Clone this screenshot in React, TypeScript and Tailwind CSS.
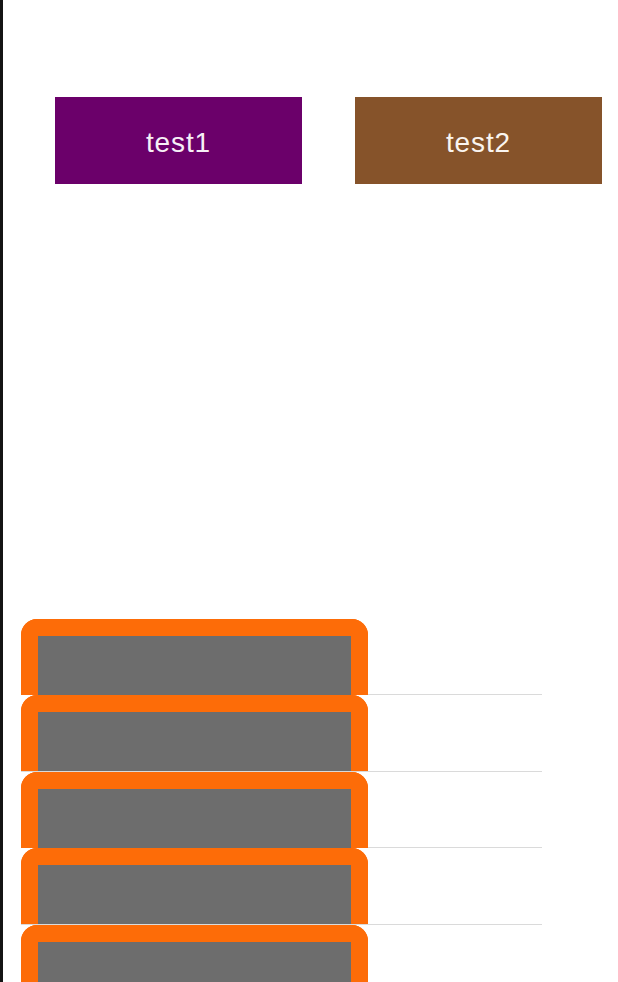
export default function App() {
  const rows = [0, 1, 2, 3, 4];
  return (
    <div className="flex min-h-[982px] h-[982px] overflow-hidden bg-white" style={{ fontFamily: '"Liberation Sans", Arial, sans-serif' }}>
      <div className="w-[3px] shrink-0 bg-[#141414]" />
      <div className="flex-1 flex flex-col">
        <div className="flex mt-[97.3px] ml-[52px] gap-[53px]">
          <div className="w-[247px] h-[86.7px] bg-[#6b006a] flex items-center justify-center pt-[4px] text-[28px] text-[#f7f0f7] tracking-[0.9px]">
            test1
          </div>
          <div className="w-[247px] h-[86.7px] bg-[#86532a] flex items-center justify-center pt-[4px] text-[28px] text-[#faf5f0] tracking-[0.9px]">
            test2
          </div>
        </div>
        <div className="mt-[435px] flex flex-col">
          {rows.map((r) => (
            <div key={r} className="flex h-[76.4px] ml-[17.7px] w-[521px] border-b border-[#dadada]">
              <div className="w-[347.6px] h-[76px] border-[17px] border-b-0 border-[#fd6c08] rounded-t-[16px] bg-[#6d6d6d]" />
            </div>
          ))}
        </div>
      </div>
    </div>
  );
}
